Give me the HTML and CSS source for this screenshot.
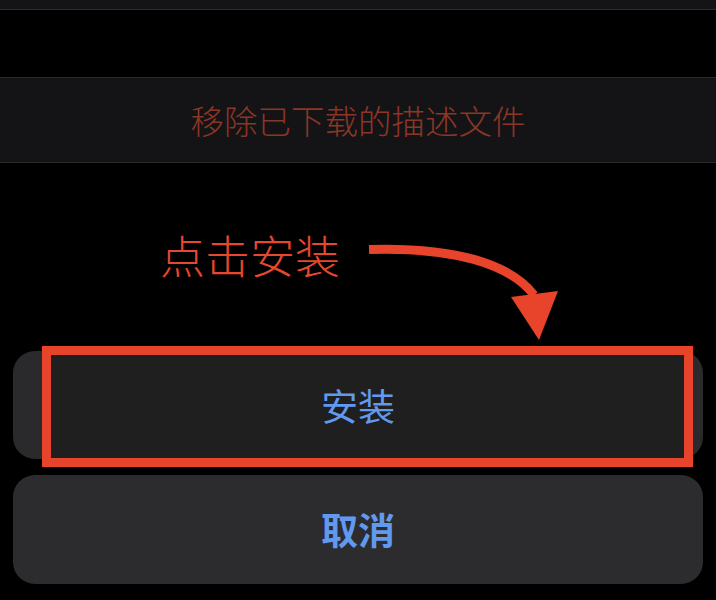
FILE: index.html
```html
<!DOCTYPE html>
<html lang="zh-CN">
<head>
<meta charset="utf-8">
<title>安装描述文件</title>
<link rel="stylesheet" href="styles.css">
</head>
<body>
<div class="screen">
  <div class="topbar"></div>
  <div class="row-remove">移除已下载的描述文件</div>
  <div class="hint"><span class="hint-text">点击安装</span></div>
  <div class="sheet">
    <div class="btn btn-install">
      <div class="highlight"></div>
      <span class="label">安装</span>
    </div>
    <div class="btn btn-cancel">
      <span class="label label-bold">取消</span>
    </div>
  </div>
  <svg class="arrow" width="716" height="600" viewBox="0 0 716 600" xmlns="http://www.w3.org/2000/svg">
    <path d="M369 249.5 C455 247 510 264 534 295" fill="none" stroke="#e8432b" stroke-width="9" stroke-linecap="butt"/>
    <polygon points="511,297 558,291 539,340" fill="#e8432b"/>
  </svg>
</div>
</body>
</html>
```

FILE: styles.css
```css
html, body {
  margin: 0;
  padding: 0;
  background: #000;
}

body {
  font-family: "Noto Sans CJK SC", "Noto Sans", sans-serif;
}

.screen {
  position: relative;
  width: 716px;
  height: 600px;
  overflow: hidden;
  background: #000;
}

.topbar {
  height: 9px;
  background: #141416;
  border-bottom: 1px solid #2c2c2e;
  margin-bottom: 67px;
}

.row-remove {
  height: 84px;
  border-top: 1px solid #2c2c2e;
  border-bottom: 1px solid #2c2c2e;
  background: #141416;
  display: flex;
  align-items: center;
  justify-content: center;
  color: #8c3626;
  font-size: 33.5px;
  font-weight: 300;
  line-height: 1;
}

.hint {
  height: 188px;
  box-sizing: border-box;
  padding-top: 69px;
  padding-left: 160px;
}

.hint-text {
  display: block;
  font-size: 45px;
  font-weight: 300;
  line-height: 45px;
  color: #e8472f;
}

.sheet {
  padding: 0 13px;
  display: flex;
  flex-direction: column;
  gap: 16px;
}

.btn {
  position: relative;
  display: flex;
  align-items: center;
  justify-content: center;
  border-radius: 22px;
  font-size: 37px;
  line-height: 1;
  color: #6199ef;
}

.btn-install {
  height: 108px;
  background: #2a2a2c;
}

.btn-cancel {
  height: 109px;
  background: #2c2c2e;
}

.highlight {
  position: absolute;
  left: 29px;
  right: 10px;
  top: -5px;
  bottom: -8px;
  border: 9px solid #e8432b;
  background: #1f1f1f;
}

.label {
  position: relative;
}

.label-bold {
  font-weight: 700;
}

.arrow {
  position: absolute;
  left: 0;
  top: 0;
  pointer-events: none;
}
```
